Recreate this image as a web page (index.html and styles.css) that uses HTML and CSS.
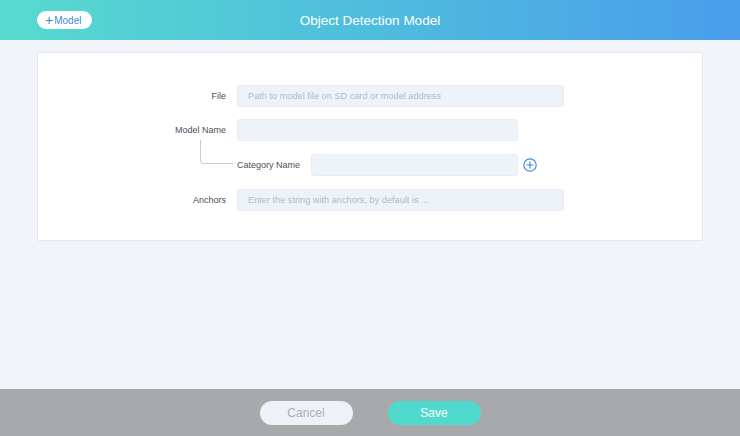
FILE: index.html
```html
<!DOCTYPE html>
<html lang="en">

<head>
  <meta charset="UTF-8">
  <meta name="viewport" content="width=device-width, initial-scale=1.0">
  <title>Object Detection Model</title>
  <link rel="stylesheet" href="styles.css">
</head>

<body>
  <div class="header">
    <div class="header-left">
      <button class="add-model"><span class="plus">+</span>Model</button>
    </div>
    <div class="title">Object Detection Model</div>
    <div class="spacer"></div>
  </div>

  <div class="main">
    <div class="card">
      <div class="form">
        <label class="label">File</label>
        <input class="field wide" placeholder="Path to model file on SD card or model address">

        <label class="label">Model Name</label>
        <input class="field mid">

        <div class="branch"></div>
        <div class="sub-row">
          <label class="sub-label">Category Name</label>
          <input class="field short">
          <svg class="add-icon" width="14" height="14" viewBox="0 0 14 14">
            <circle cx="7" cy="7" r="6.2" fill="none" stroke="#3b8de6" stroke-width="1.2" />
            <path d="M7 3.4v7.2M3.4 7h7.2" stroke="#3b8de6" stroke-width="1.2" />
          </svg>
        </div>

        <label class="label">Anchors</label>
        <input class="field wide" placeholder="Enter the string with anchors, by default is ...">
      </div>
    </div>
  </div>

  <div class="footer">
    <button class="btn cancel">Cancel</button>
    <button class="btn save">Save</button>
  </div>
</body>

</html>
```

FILE: styles.css
```css
html,
body {
  margin: 0;
  height: 100%;
}

body {
  display: flex;
  flex-direction: column;
  font-family: "Liberation Sans", Arial, sans-serif;
  background-color: #f1f5fa;
  color: #4a4f57;
}

.header {
  height: 40px;
  flex-shrink: 0;
  display: grid;
  grid-template-columns: 1fr auto 1fr;
  align-items: center;
  background: linear-gradient(90deg, #57dace 0%, #4fc0dc 45%, #4a9deb 100%);
}

.header-left {
  padding-left: 37px;
}

.add-model {
  display: flex;
  align-items: center;
  height: 18px;
  width: 55px;
  padding: 0 0 0 8px;
  border: none;
  border-radius: 9px;
  background: #fff;
  color: #3f8ad8;
  font-family: inherit;
  font-size: 10px;
}

.add-model .plus {
  font-size: 14px;
  font-weight: 300;
  margin-right: 1px;
  line-height: 1;
}

.title {
  color: #fff;
  font-size: 13.5px;
}

.main {
  flex-grow: 1;
  padding: 12px 37px;
}

.card {
  background: #fff;
  border: 1px solid #e3e8ee;
  border-radius: 2px;
  padding: 32px 0 29px;
}

.form {
  display: grid;
  grid-template-columns: 188px auto;
  column-gap: 11px;
  row-gap: 12px;
  align-items: center;
}

.label {
  text-align: right;
  font-size: 9px;
  color: #4a4f57;
}

.field {
  box-sizing: border-box;
  height: 22px;
  border: 1px solid #e6ecf4;
  border-radius: 3px;
  background: #eef3fa;
  padding: 0 10px;
  font-family: inherit;
  font-size: 9.2px;
  outline: none;
}

.field::placeholder {
  color: #b3bac5;
}

.wide {
  width: 327px;
}

.mid {
  width: 281px;
}

.short {
  width: 207px;
}

.branch {
  position: relative;
  align-self: stretch;
}

.branch::before {
  content: "";
  position: absolute;
  left: 162px;
  top: -13px;
  width: 32px;
  height: 23px;
  border-left: 1px solid #c9cdd3;
  border-bottom: 1px solid #c9cdd3;
  border-bottom-left-radius: 4px;
}

.sub-row {
  display: flex;
  align-items: center;
  margin-top: 1px;
  margin-bottom: 1px;
}

.sub-label {
  font-size: 9px;
  width: 74px;
  color: #4a4f57;
}

.add-icon {
  margin-left: 5px;
}

.footer {
  height: 47px;
  flex-shrink: 0;
  background: #a7a9ab;
  display: flex;
  justify-content: center;
  align-items: center;
  gap: 35px;
}

.btn {
  width: 93px;
  height: 24px;
  border: none;
  border-radius: 12px;
  font-family: inherit;
  font-size: 12px;
}

.cancel {
  background: #eef2f8;
  color: #a9b0ba;
}

.save {
  background: #4fdacd;
  color: #fff;
}
```
